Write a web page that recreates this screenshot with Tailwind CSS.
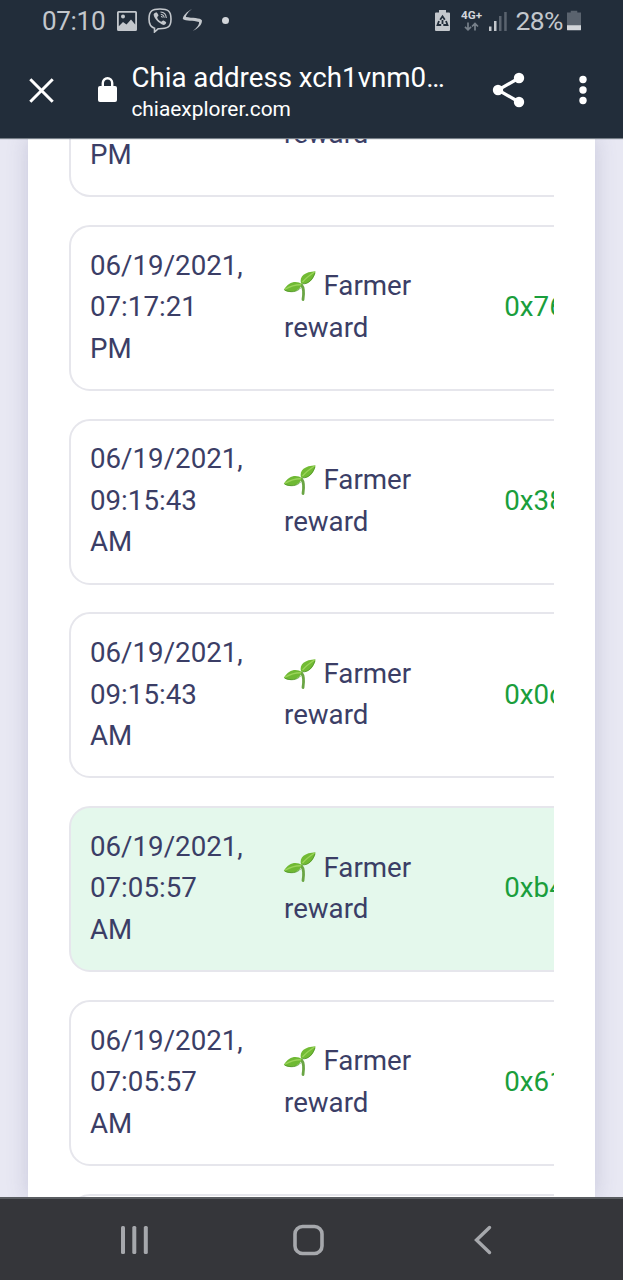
<!DOCTYPE html>
<html lang="en">
<head>
<meta charset="utf-8">
<title>Chia address</title>
<script src="https://cdn.jsdelivr.net/npm/@tailwindcss/browser@4"></script>
</head>
<body class="w-[623px] h-[1280px] overflow-hidden flex flex-col bg-[#e8e8f3] font-[Roboto,sans-serif]">
<header class="h-[138px] shrink-0 bg-[#222d3a] relative z-10 shadow-[0_1px_1px_#777f88]">
  <div class="h-[42px] flex items-center text-[#c3c7cc] text-[27px] leading-[42px]">
    <span class="ml-[42px] w-[64px] whitespace-nowrap text-[26px] tracking-[-0.3px]">07:10</span>
    <svg class="ml-[11px] w-[20px] h-[20px] shrink-0 -mt-[1px]" viewBox="0 0 20 20"><path fill="currentColor" fill-rule="evenodd" d="M1.5 0h17Q20 0 20 1.500v17q0 1.500-1.500 1.500h-17Q0 20 0 18.500v-17Q0 0 1.500 0zM1.800 1.800v13.400L6 11l3.500 2.500 4.500-5 4.200 5V1.800z"/><circle cx="6" cy="5.500" r="2" fill="currentColor"/></svg>
    <svg class="ml-[11px] w-[24px] h-[26px] shrink-0 -mt-[2px]" viewBox="0 0 24 26" fill="none" stroke="currentColor"><path stroke-width="1.600" d="M12 2C4 2 1 4 1 12c0 5 1.500 8 5.500 9.200V25l3.600-3.200C20 22 23 20 23 12 23 4 20 2 12 2z"/><path fill="currentColor" stroke="none" d="M6.300 6.200l2-1c.8.5 1.800 2 2.200 3-.2 1-1.500 1.400-1.300 2.300.5 2 2 3.500 4 4.200.8 0 1.300-1.300 2.300-1.200 1.200.6 2.500 1.300 2.700 2-.2 1.400-1.300 2.500-2.600 2.600C10.500 16 6 11.500 5.600 7.500z"/><path stroke-width="1.100" d="M12.500 5c4 .2 5.600 2.500 5.800 6M12.800 7.200c2.200.2 3.200 1.400 3.400 3.600M13 9.200c.9.100 1.300.5 1.400 1.400"/></svg>
    <svg class="ml-[10px] w-[22px] h-[24px] shrink-0 -mt-[2px]" viewBox="0 0 22 24"><path fill="currentColor" d="M10 1C5 3.500 1 7.500 .8 11 4 13.500 11 12.200 17 14c.4 2.800-1.800 5.300-6.200 9 5-2.500 9.200-6 9.200-10.500C18.500 9.500 10 10.200 3.900 9 4 7 6.500 3.500 10 1z"/></svg>
    <span class="ml-[18px] size-[7px] rounded-full bg-[#d3d6da] -mt-[2px]"></span>
    <svg class="ml-[206px] w-[15px] h-[22px] shrink-0 -mt-[1px]" viewBox="0 0 15 22"><path fill="currentColor" d="M4 0h7v2.500h3q1 0 1 1V20q0 1-1 1H1q-1 0-1-1V3.500q0-1 1-1h3z"/><path fill="none" stroke="#222d3a" stroke-width="1.800" d="M5.200 9.800l2.300-3.500 2.300 3.500M4 11l-1.500 4h3.700M11 11l1.500 4H8.300M7.500 10v4"/></svg>
    <svg class="ml-[11px] w-[22px] h-[24px] shrink-0" viewBox="0 0 22 24"><text x="0" y="10" font-family="Roboto" font-weight="700" font-size="11" textLength="21" lengthAdjust="spacingAndGlyphs" fill="#d3d6da">4G+</text><path fill="none" stroke="#77808a" stroke-width="1.700" d="M7 13.500v7M4 17.800l3 3 3-3M14 21.500v-7M11 17.500l3-3 3 3"/></svg>
    <svg class="ml-[5px] w-[19px] h-[20px] shrink-0" viewBox="0 0 19 20"><path fill="#c3c7cc" d="M1 15.500h2.500V20H1zM6 10h2.500v10H6z"/><path fill="#5a636e" d="M11 5h2.500v15H11zM16.200 1h2.500v19h-2.500z"/></svg>
    <span class="ml-[8.500px] w-[51px] whitespace-nowrap text-[26.500px] tracking-[-0.600px]">28%</span>
    <svg class="w-[14px] h-[22px] shrink-0 -mt-[1px]" viewBox="0 0 15 22"><path fill="#5a636e" d="M4 0h7v2h4v18H0V2h4z"/><path fill="#d3d6da" d="M0 15.500h15V20q0 1-1 1H1q-1 0-1-1z"/></svg>
  </div>
  <div class="h-[96px] flex items-center text-white">
    <svg class="ml-[29px] w-[25px] h-[25px]" viewBox="0 0 25 25"><path fill="none" stroke="#fff" stroke-width="3" d="M1.300 1.300l22.400 22.400M23.700 1.300L1.300 23.700"/></svg>
    <svg class="ml-[43px] w-[21px] h-[26px]" viewBox="0 0 21 26"><rect x="1" y="9" width="19" height="16" rx="2" fill="#fff"/><path fill="none" stroke="#fff" stroke-width="2.400" d="M5.800 10V6a4.700 4.700 0 019.400 0v4"/></svg>
    <div class="ml-[13.400px] w-[330.600px] flex flex-col mt-[4px] whitespace-nowrap">
      <span class="text-[27.700px] leading-[35px]">Chia address xch1vnm0…</span>
      <span class="text-[20.900px] leading-[29px]">chiaexplorer.com</span>
    </div>
    <svg class="ml-[30px] w-[34px] h-[36px]" viewBox="0 0 34 36"><path fill="none" stroke="#fff" stroke-width="3.200" d="M27 6L6 18l21 12"/><g fill="#fff"><circle cx="27" cy="6" r="5.200"/><circle cx="6" cy="18" r="5.200"/><circle cx="27" cy="30" r="5.200"/></g></svg>
    <svg class="ml-[53px] w-[8px] h-[30px]" viewBox="0 0 8 30" fill="#fff"><circle cx="4" cy="4.500" r="3.700"/><circle cx="4" cy="15" r="3.700"/><circle cx="4" cy="25.500" r="3.700"/></svg>
  </div>
</header>

<svg class="hidden"><defs>
  <symbol id="sprout" viewBox="0 0 33 32"><path d="M18.500 15c2.600 3 2.600 7.500 1.500 14.500" fill="none" stroke="#6aa544" stroke-width="2.800" stroke-linecap="round"/><path fill="#6fb934" d="M19 14.200C14 10.300 5.500 11 .8 20 7 23.500 15.500 22.500 19 14.200z"/><path fill="#72bb34" d="M18 13.500C16 6 22 1.800 32.500 1.200 31.500 9 25 15.500 18 13.500z"/><path d="M18 14.800C12 14.500 7 16.500 2 19.300M19.500 12C23 8 27 5 31.500 2" fill="none" stroke="#9bd45a" stroke-width="1.300"/><path d="M19.500 13.800c6 .6 10.500-5 12.500-11M18 17.500c-4 5-11 5-16 2.800" fill="none" stroke="#4f932a" stroke-width=".8"/></symbol>
</defs></svg>

<main class="h-[1059px] shrink-0 overflow-hidden px-[28px]">
  <section class="h-full bg-white pl-[41px] pr-[41.500px] shadow-[0_0_20px_rgba(80,80,130,0.22)]">
    <div class="h-full overflow-hidden">
      <div id="rows" class="w-[900px] flex flex-col gap-[27.700px] text-[27.700px] leading-[41.530px] text-[#3b3e66]">
        <article class="h-[59.100px] shrink-0 flex items-start rounded-b-[21px] border-2 border-t-0 border-[#e6e6ec] pl-[19px] bg-white">
          <div class="w-[194px] -mt-[4px]">PM</div>
          <div class="-mt-[25px]">reward</div>
        </article>
      </div>
    </div>
  </section>
</main>

<nav class="h-[83px] shrink-0 bg-[#35363a] border-t-2 border-[#5a5d61]">
  <div class="h-[81px] flex items-center pt-[1px]">
    <svg class="ml-[120px] w-[29px] h-[30px]" viewBox="0 0 29 30" fill="#a6a8ac"><rect x="1" y="1" width="4" height="28" rx="1.500"/><rect x="12.300" y="1" width="4" height="28" rx="1.500"/><rect x="23.800" y="1" width="4" height="28" rx="1.500"/></svg>
    <svg class="ml-[143px] w-[33px] h-[32px]" viewBox="0 0 33 32"><rect x="3" y="2.500" width="27" height="27" rx="7.500" fill="none" stroke="#a6a8ac" stroke-width="3.600"/></svg>
    <svg class="ml-[148px] w-[20px] h-[30px]" viewBox="0 0 20 30"><path fill="none" stroke="#a6a8ac" stroke-width="3.400" stroke-linecap="round" d="M16.500 2.500L3.500 15l13 12.500"/></svg>
  </div>
</nav>

<script>
const data = [
  ["06/19/2021,", "07:17:21", "PM", "0x76"],
  ["06/19/2021,", "09:15:43", "AM", "0x38"],
  ["06/19/2021,", "09:15:43", "AM", "0x0c"],
  ["06/19/2021,", "07:05:57", "AM", "0xb4", true],
  ["06/19/2021,", "07:05:57", "AM", "0x61"],
];
document.getElementById("rows").insertAdjacentHTML("beforeend", data.map(([d, t, m, h, on]) => `
  <article class="h-[166.120px] shrink-0 flex items-center rounded-[21px] border-2 border-[#e6e6ec] pl-[19px] ${on ? "bg-[#e4f8ec]" : "bg-white"}">
    <div class="w-[194px] -mt-[2px]">${d}<br>${t}<br>${m}</div>
    <div class="w-[220.300px] -mt-[2px]"><svg class="inline-block w-[33px] h-[32px] -mt-[4px] mr-[7.500px] -ml-[1px]"><use href="#sprout"/></svg>Farmer<br>reward</div>
    <div class="-mt-[2px] text-[#1a9e3c]">${h}</div>
  </article>`).join("") + `<article class="h-[40px] shrink-0 rounded-t-[21px] border-2 border-[#e6e6ec]"></article>`);
</script>
</body>
</html>
